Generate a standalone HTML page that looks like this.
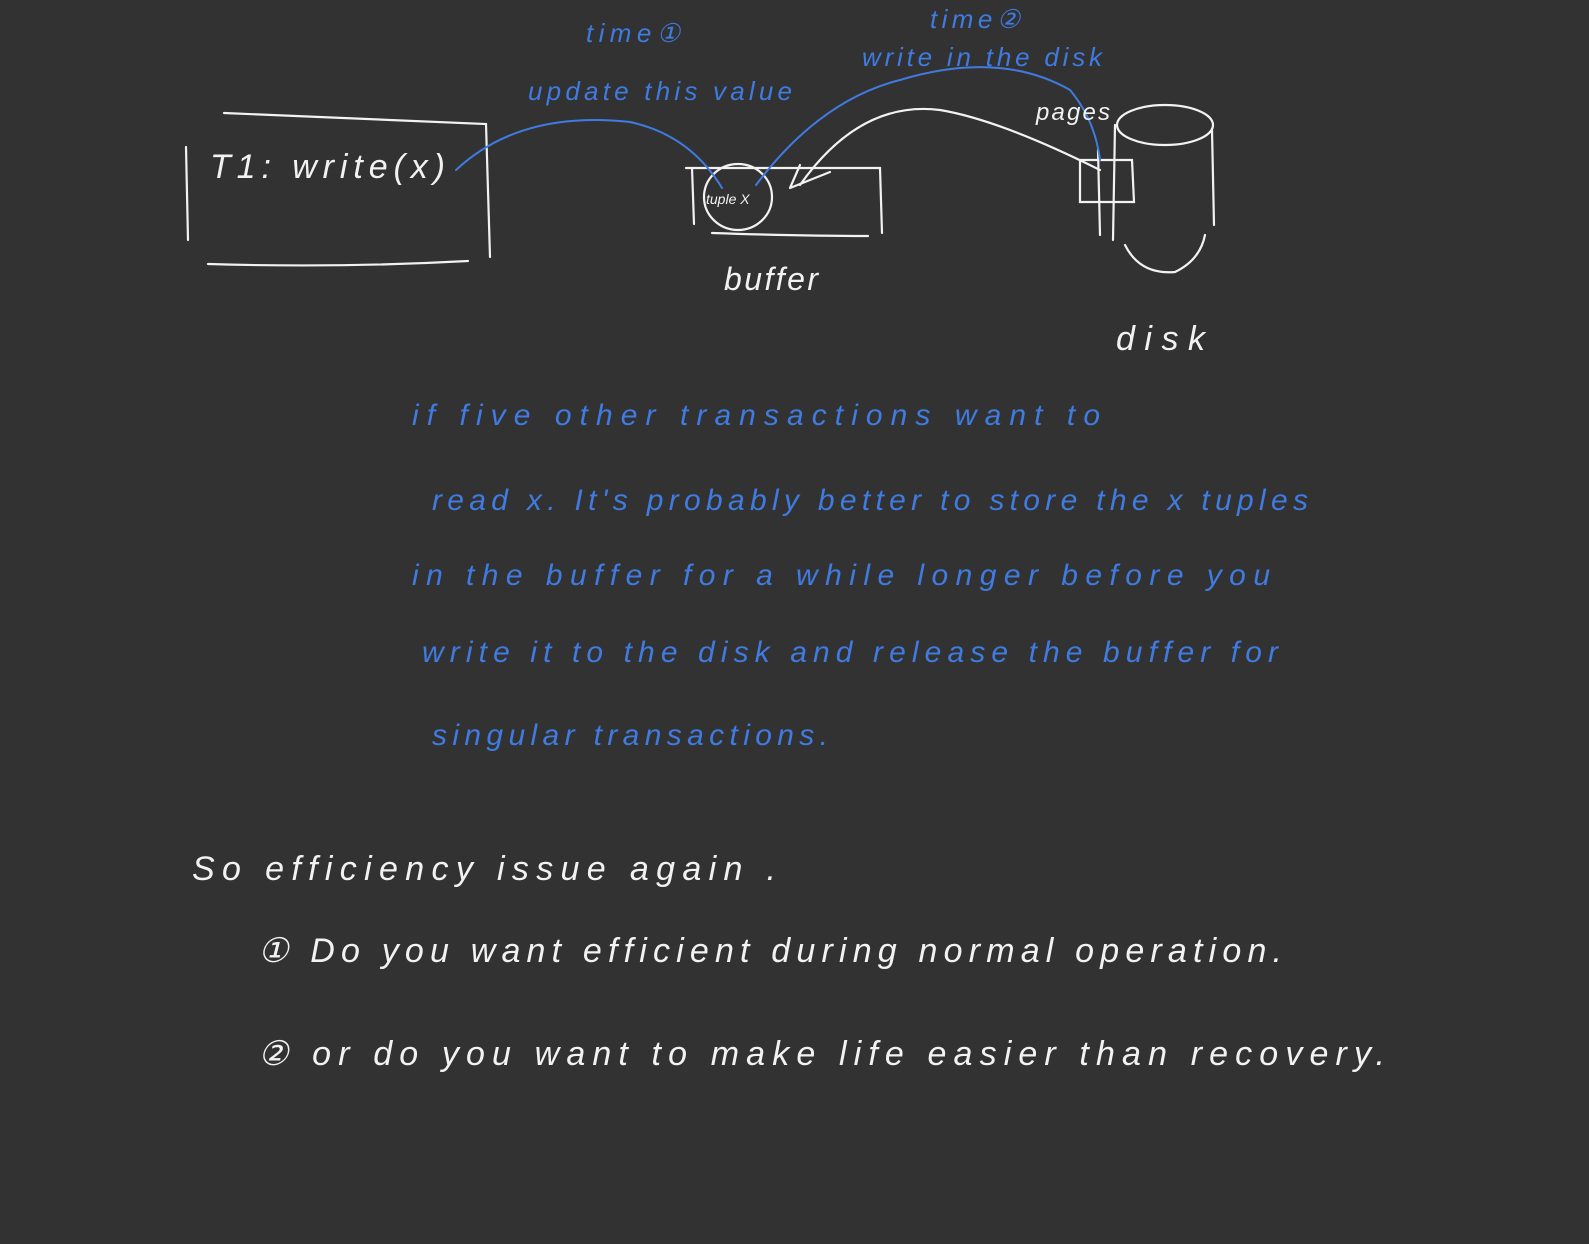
<!DOCTYPE html>
<html><head><meta charset="utf-8"><style>
html,body{margin:0;padding:0;background:#323232;width:1589px;height:1244px;overflow:hidden}
svg{display:block}
text{font-family:"Liberation Sans",sans-serif;font-style:italic}
.w{fill:#f2f2f2}.b{fill:#3f7be0}
</style></head><body>
<svg width="1589" height="1244" viewBox="0 0 1589 1244" xmlns="http://www.w3.org/2000/svg">
<rect width="1589" height="1244" fill="#323232"/>
<g fill="none" stroke="#f2f2f2" stroke-width="2.2" stroke-linecap="round">
<path d="M224 113 Q350 118 486 124 L490 257"/>
<path d="M186 147 L188 240"/>
<path d="M208 264 Q340 268 468 261"/>
<path d="M686 168 L880 168 L882 233"/>
<path d="M692 168 L694 224"/>
<path d="M712 233 Q800 236 868 236"/>
<ellipse cx="738" cy="197" rx="34" ry="33"/>
<path d="M800 185 Q860 100 940 110 Q1000 120 1100 170"/>
<path d="M790 188 L800 165 M790 188 L830 172"/>
<path d="M1080 160 L1132 160 L1134 202 L1080 202 Z"/>
<path d="M1098 150 L1100 235"/>
<ellipse cx="1165" cy="125" rx="48" ry="20"/>
<path d="M1115 125 L1113 240 M1212 130 L1214 225"/>
<path d="M1125 245 Q1140 275 1175 272 Q1200 260 1205 235"/>
</g>
<g fill="none" stroke="#3f7be0" stroke-width="2" stroke-linecap="round">
<path d="M456 170 Q520 110 630 122 Q690 135 722 188"/>
<path d="M756 185 Q820 100 900 80 Q1000 50 1070 90 Q1095 120 1100 160"/>
</g>
<text x="210" y="178" font-size="34" class="w" textLength="235" lengthAdjust="spacing">T1: write(x)</text>
<text x="706" y="204" font-size="14" class="w">tuple X</text>
<text x="724" y="290" font-size="32" class="w" textLength="94" lengthAdjust="spacing">buffer</text>
<text x="1036" y="120" font-size="24" class="w" textLength="74" lengthAdjust="spacing">pages</text>
<text x="1116" y="350" font-size="34" class="w" textLength="89" lengthAdjust="spacing">disk</text>
<g class="b" font-size="26">
<text x="586" y="42" textLength="94" lengthAdjust="spacing">time①</text>
<text x="528" y="100" textLength="264" lengthAdjust="spacing">update this value</text>
<text x="930" y="28" textLength="90" lengthAdjust="spacing">time②</text>
<text x="862" y="66" textLength="240" lengthAdjust="spacing">write in the disk</text>
</g>
<g class="b" font-size="30">
<text x="412" y="425" textLength="688" lengthAdjust="spacing">if  five   other  transactions   want  to</text>
<text x="432" y="510" textLength="876" lengthAdjust="spacing">read x. It's probably  better to store the x tuples</text>
<text x="412" y="585" textLength="858" lengthAdjust="spacing">in the buffer  for a while longer  before  you</text>
<text x="422" y="662" textLength="856" lengthAdjust="spacing">write  it  to  the disk  and  release  the buffer  for</text>
<text x="432" y="745" textLength="396" lengthAdjust="spacing">singular  transactions.</text>
</g>
<g class="w" font-size="34">
<text x="192" y="880" textLength="584" lengthAdjust="spacing">So efficiency  issue  again .</text>
<text x="258" y="962" textLength="1024" lengthAdjust="spacing">① Do  you  want  efficient  during   normal  operation.</text>
<text x="258" y="1065" textLength="1127" lengthAdjust="spacing">② or   do  you  want  to  make  life  easier  than  recovery.</text>
</g>
</svg>
</body></html>
